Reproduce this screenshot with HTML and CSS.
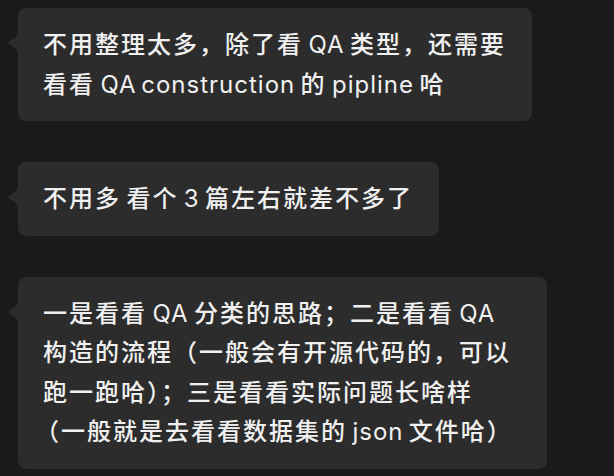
FILE: index.html
```html
<!DOCTYPE html>
<html lang="zh-CN">
<head>
<meta charset="utf-8">
<title>Chat</title>
<link rel="stylesheet" href="styles.css">
</head>
<body>
<div class="chat">
  <div class="bubble">
    <svg class="tail" width="10" height="20" viewBox="0 0 10 20"><path d="M10 0 C10 5 0 7.5 0 10 C0 12.5 10 15 10 20 Z" fill="#2c2c2c"/></svg>
    <p class="text">不用整理太多，除了看 <span class="en">QA</span> 类型，还需要<br>看看 <span class="en">QA construction</span> 的 <span class="en">pipline</span> 哈</p>
  </div>
  <div class="bubble">
    <svg class="tail" width="10" height="20" viewBox="0 0 10 20"><path d="M10 0 C10 5 0 7.5 0 10 C0 12.5 10 15 10 20 Z" fill="#2c2c2c"/></svg>
    <p class="text">不用多 看个 <span class="en">3</span> 篇左右就差不多了</p>
  </div>
  <div class="bubble bubble-wrapped">
    <svg class="tail" width="10" height="20" viewBox="0 0 10 20"><path d="M10 0 C10 5 0 7.5 0 10 C0 12.5 10 15 10 20 Z" fill="#2c2c2c"/></svg>
    <p class="text">一是看看 <span class="en">QA</span> 分类的思路；二是看看 <span class="en">QA</span><br>构造的流程（一般会有开源代码的，可以<br>跑一跑哈）；三是看看实际问题长啥样<br><span class="paren">（</span>一般就是去看看数据集的 <span class="en">json</span> 文件哈）</p>
  </div>
</div>
</body>
</html>
```

FILE: styles.css
```css
html, body {
  margin: 0;
  padding: 0;
  background: #1a1a1a;
}
body {
  width: 614px;
  height: 476px;
  overflow: hidden;
}
.chat {
  display: flex;
  flex-direction: column;
  align-items: flex-start;
  gap: 41px;
  padding: 8px 0 0 18px;
}
.bubble {
  position: relative;
  background: #2c2c2c;
  border-radius: 8px;
  padding: 17px 26px 17px 25px;
}
.bubble-wrapped {
  padding-right: 34px;
}
.tail {
  position: absolute;
  left: -10px;
  top: 25px;
  display: block;
}
.text {
  margin: 0;
  color: #f0f0f0;
  font-family: "Inter", "Noto Sans CJK SC", sans-serif;
  font-size: 24px;
  font-weight: 500;
  letter-spacing: 2px;
  word-spacing: -3px;
  line-height: 39.5px;
  white-space: nowrap;
}
.en {
  font-weight: 400;
  letter-spacing: 1px;
}
.paren {
  margin-left: -8px;
}
```
